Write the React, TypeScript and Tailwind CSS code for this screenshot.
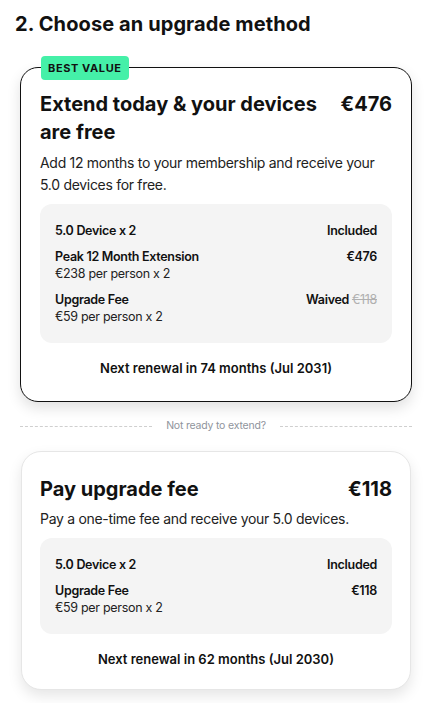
import React from "react";

type Line = {
  label: string;
  sub?: string;
  value: React.ReactNode;
};

const font = { fontFamily: "Inter, 'Noto Sans', sans-serif" };

function Breakdown({ lines }: { lines: Line[] }) {
  return (
    <div className="mt-2 flex flex-col gap-[9px] rounded-xl bg-[#f4f4f4] px-[15px] py-[18px]">
      {lines.map((line) => (
        <div
          key={line.label}
          className="flex items-start justify-between text-[12.5px] leading-[17px] tracking-[-0.3px]"
        >
          <div>
            <div className="font-semibold text-[#111]">{line.label}</div>
            {line.sub && <div className="text-[#222]">{line.sub}</div>}
          </div>
          <div className="font-semibold text-[#111]">{line.value}</div>
        </div>
      ))}
    </div>
  );
}

export default function App() {
  return (
    <div className="min-h-screen bg-white pb-6 text-[#111]" style={font}>
      {/* Header */}
      <h2 className="px-[15px] pt-[10px] text-[20px] font-bold leading-[28px] tracking-[0.1px]">
        2. Choose an upgrade method
      </h2>

      {/* Best value option */}
      <div className="relative mx-5 mt-[29px] rounded-[18px] border border-[#111] bg-white px-[19px] pb-[23px] pt-[22px] shadow-[0_6px_14px_rgba(0,0,0,0.12)]">
        <span className="absolute -top-3 left-5 rounded bg-[#45f0a8] px-[7px] py-[5px] text-[11px] font-bold leading-[14px] tracking-[0.6px]">
          BEST VALUE
        </span>
        <div className="flex items-start justify-between gap-4">
          <h3 className="max-w-[290px] text-[20px] font-bold leading-[28px]">
            Extend today &amp; your devices are free
          </h3>
          <span className="text-[20px] font-bold leading-[28px]">€476</span>
        </div>
        <p className="mt-[6px] text-[14px] leading-[22px] tracking-[-0.3px] text-[#222]">
          Add 12 months to your membership and receive your 5.0 devices for free.
        </p>
        <Breakdown
          lines={[
            { label: "5.0 Device x 2", value: "Included" },
            { label: "Peak 12 Month Extension", sub: "€238 per person x 2", value: "€476" },
            {
              label: "Upgrade Fee",
              sub: "€59 per person x 2",
              value: (
                <>
                  Waived <span className="font-normal text-[#b0b0b0] line-through">€118</span>
                </>
              ),
            },
          ]}
        />
        <p className="mt-[15px] text-center text-[13px] font-semibold leading-[20px]">
          Next renewal in 74 months (Jul 2031)
        </p>
      </div>

      {/* Divider */}
      <div className="mx-5 mt-4 flex items-center gap-[14px]">
        <div className="flex-1 border-t border-dashed border-[#cfcfcf]" />
        <span className="text-[10.5px] leading-[16px] tracking-[-0.2px] text-[#8f949c]">
          Not ready to extend?
        </span>
        <div className="flex-1 border-t border-dashed border-[#cfcfcf]" />
      </div>

      {/* Upgrade fee option */}
      <div className="mx-[21px] mt-[17px] rounded-[20px] border border-[#e6e6e6] bg-white px-[18px] pb-[20px] pt-[23px] shadow-[0_6px_14px_rgba(0,0,0,0.1)]">
        <div className="flex items-start justify-between gap-4">
          <h3 className="text-[20px] font-bold leading-[28px]">Pay upgrade fee</h3>
          <span className="text-[20px] font-bold leading-[28px]">€118</span>
        </div>
        <p className="mt-[5px] text-[14px] leading-[22px] tracking-[-0.3px] text-[#222]">
          Pay a one-time fee and receive your 5.0 devices.
        </p>
        <Breakdown
          lines={[
            { label: "5.0 Device x 2", value: "Included" },
            { label: "Upgrade Fee", sub: "€59 per person x 2", value: "€118" },
          ]}
        />
        <p className="mt-[15px] text-center text-[13px] font-semibold leading-[20px]">
          Next renewal in 62 months (Jul 2030)
        </p>
      </div>
    </div>
  );
}
